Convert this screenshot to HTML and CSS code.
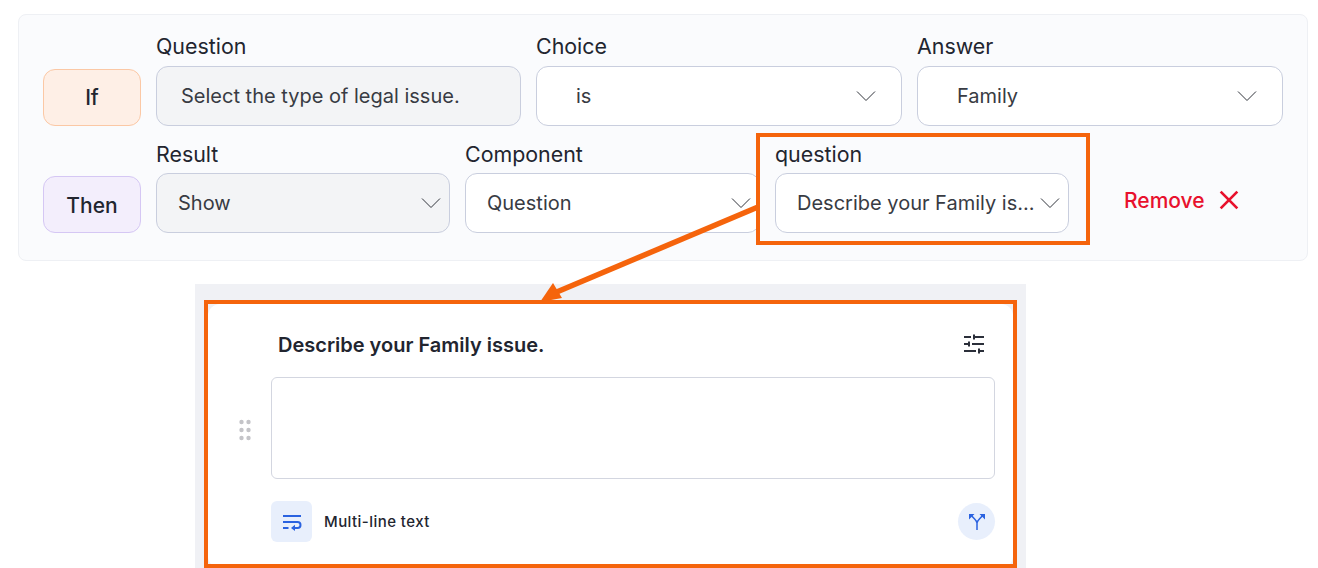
FILE: index.html
```html
<!DOCTYPE html>
<html lang="en">
<head>
<meta charset="utf-8">
<title>Condition</title>
<link rel="stylesheet" href="styles.css">
</head>
<body>
<section class="panel">
  <div class="row row-if">
    <div class="badge badge-if">If</div>
    <div class="fields">
      <div class="field wide"><label>Question</label><div class="box muted indent">Select the type of legal issue.</div></div>
      <div class="field wide"><label>Choice</label><div class="box indent2"><span>is</span><svg class="chev" viewBox="0 0 20 12"><path d="M1 1.5 10 10.500 19 1.500"/></svg></div></div>
      <div class="field wide"><label>Answer</label><div class="box indent2"><span>Family</span><svg class="chev" viewBox="0 0 20 12"><path d="M1 1.5 10 10.500 19 1.500"/></svg></div></div>
    </div>
  </div>
  <div class="row row-then">
    <div class="badge badge-then">Then</div>
    <div class="fields">
      <div class="field narrow"><label>Result</label><div class="box muted tight"><span>Show</span><svg class="chev" viewBox="0 0 20 12"><path d="M1 1.5 10 10.500 19 1.500"/></svg></div></div>
      <div class="field narrow"><label>Component</label><div class="box tight"><span>Question</span><svg class="chev" viewBox="0 0 20 12"><path d="M1 1.5 10 10.500 19 1.500"/></svg></div></div>
      <div class="field narrow"><label>question</label><div class="box tight"><span>Describe your Family is...</span><svg class="chev" viewBox="0 0 20 12"><path d="M1 1.5 10 10.500 19 1.500"/></svg></div></div>
      <div class="remove"><span>Remove</span><svg class="x" viewBox="0 0 18 18"><path d="M1.500 1.500 16.500 16.500M16.500 1.500 1.500 16.500"/></svg></div>
    </div>
  </div>
</section>

<section class="preview">
  <div class="card">
    <div class="card-head">
      <h2>Describe your Family issue.</h2>
      <svg class="sliders" viewBox="0 0 20 20"><path d="M0 3H7M10 3H20M10 .5V5.500M0 10H5M5 7.500V12.500M8 10H20M0 17H12M15 17H20M15 14.500V19.500"/></svg>
    </div>
    <div class="card-body">
      <svg class="grip" viewBox="0 0 12 22"><circle cx="2.500" cy="3" r="2.200"/><circle cx="9.500" cy="3" r="2.200"/><circle cx="2.500" cy="11" r="2.200"/><circle cx="9.500" cy="11" r="2.200"/><circle cx="2.500" cy="19" r="2.200"/><circle cx="9.500" cy="19" r="2.200"/></svg>
      <div class="textarea"></div>
    </div>
    <div class="card-foot">
      <div class="type-icon"><svg viewBox="0 0 20 16"><path d="M1 2H19M1 8H15.500C19.500 8 19.500 14 15.500 14H10.500M1 14H6.500"/><path class="fill" d="M13 10.800V17L9 14Z"/></svg></div>
      <span class="type-label">Multi-line text</span>
      <div class="branch"><svg viewBox="0 0 16 17"><path d="M8 17V10C8 7.500 5 6 2.500 2.500M8 10C8 7.500 11 6 13.500 2.500"/><path class="fill" d="M0 1H5.500L0 6.500ZM16 1H10.500L16 6.500Z"/></svg></div>
    </div>
  </div>
</section>

<div class="callout callout-top"></div>
<div class="callout callout-bottom"></div>
<svg class="arrow" viewBox="0 0 1318 568"><path class="arrow-line" d="M758 207 552 294"/><path class="arrow-head" d="M540 302 553 283 562 298Z"/></svg>
</body>
</html>
```
FILE: styles.css
```css
* { box-sizing: border-box; }
html, body { margin: 0; padding: 0; }
body {
  width: 1318px;
  height: 568px;
  overflow: hidden;
  background: #fff;
  font-family: Inter, "Liberation Sans", sans-serif;
  color: #22252f;
  position: relative;
  padding: 14px 10px 0 18px;
}
.panel {
  height: 247px;
  background: #fafbfd;
  border: 1px solid #eef0f4;
  border-radius: 8px;
  padding: 19px 24px 0;
}
.row { display: flex; align-items: flex-end; gap: 15px; }
.row-then { margin-top: 16px; }
.badge {
  flex: none;
  width: 98px;
  height: 57px;
  border-radius: 12px;
  display: flex;
  align-items: center;
  justify-content: center;
  font-size: 21px;
  font-weight: 500;
  color: #22252f;
}
.badge-then { padding-top: 1px; }
.badge-if { background: #feefe6; border: 1px solid #fbc8a5; }
.badge-then { background: #f3eefc; border: 1px solid #d5c7f4; }
.fields { display: flex; gap: 15px; flex: 1; }
.field { display: flex; flex-direction: column; }
.wide { width: 366px; }
.wide:first-child { width: 365px; }
.narrow { width: 294px; }
.narrow:nth-child(2) { width: 295px; }
.field label {
  font-size: 21.400px;
  line-height: 25px;
  margin-bottom: 7px;
  color: #22252f;
}
.row-then .field label { margin-bottom: 6px; }
.box {
  height: 60px;
  background: #fff;
  border: 1px solid #c9cede;
  border-radius: 12px;
  display: flex;
  align-items: center;
  justify-content: space-between;
  font-size: 20px;
  color: #383b43;
  white-space: nowrap;
}
.muted { background: #f3f4f6; }
.indent { padding-left: 24px; }
.indent2 { padding: 0 25px 0 39px; }
.tight { padding: 0 8px 0 21px; }
.chev { width: 20px; height: 12px; flex: none; fill: none; stroke: #31343c; stroke-width: 1; }
.remove {
  display: flex;
  align-items: center;
  gap: 14px;
  margin: 46px 0 0 40px;
  height: 24px;
  color: #e8112d;
  font-size: 21px;
  font-weight: 500;
}
.x { width: 20px; height: 20px; fill: none; stroke: #e8112d; stroke-width: 2.400; }
.preview {
  margin: 23px 0 0 177px;
  width: 831px;
  height: 284px;
  background: #f0f1f5;
  padding: 20px 13px 0;
}
.card {
  width: 805px;
  height: 264px;
  background: #fff;
  border-radius: 12px;
  padding: 24px 18px 0 63px;
}
.card-head {
  display: flex;
  align-items: center;
  justify-content: space-between;
  height: 32px;
  padding: 1px 11px 0 7px;
}
.card-head h2 { margin: 0; font-size: 20px; font-weight: 600; color: #22252f; }
.sliders { width: 20px; height: 20px; fill: none; stroke: #2b2f3a; stroke-width: 2; margin-top: -1px; }
.card-body { position: relative; margin-top: 17px; }
.textarea { height: 102px; border: 1px solid #d3d6e0; border-radius: 6px; }
.grip { position: absolute; left: -32px; top: 42px; width: 12px; height: 22px; fill: #c4c4c8; }
.card-foot { display: flex; align-items: center; margin-top: 22px; height: 41px; }
.type-icon {
  width: 41px;
  height: 41px;
  border-radius: 6px;
  background: #e8effc;
  display: flex;
  align-items: center;
  justify-content: center;
}
.type-icon svg { width: 20px; height: 16px; fill: none; stroke: #2a62e0; stroke-width: 2; overflow: visible; }
.type-icon .fill { fill: #2a62e0; stroke: none; }
.type-label { margin-left: 12px; font-size: 15px; font-weight: 500; letter-spacing: .45px; color: #22252f; }
.branch {
  margin-left: auto;
  width: 37px;
  height: 37px;
  border-radius: 50%;
  background: #e8effc;
  display: flex;
  align-items: center;
  justify-content: center;
}
.branch svg { width: 16px; height: 17px; fill: none; stroke: #2a62e0; stroke-width: 1.500; }
.branch .fill { fill: #2a62e0; stroke: none; }
.callout { position: absolute; border: 4px solid #f5640c; }
.callout-top { left: 756px; top: 133px; width: 334px; height: 112px; }
.callout-bottom { left: 204px; top: 300px; width: 813px; height: 268px; }
.arrow { position: absolute; left: 0; top: 0; width: 1318px; height: 568px; pointer-events: none; }
.arrow-line { stroke: #f5640c; stroke-width: 5.500; fill: none; }
.arrow-head { fill: #f5640c; }
```
